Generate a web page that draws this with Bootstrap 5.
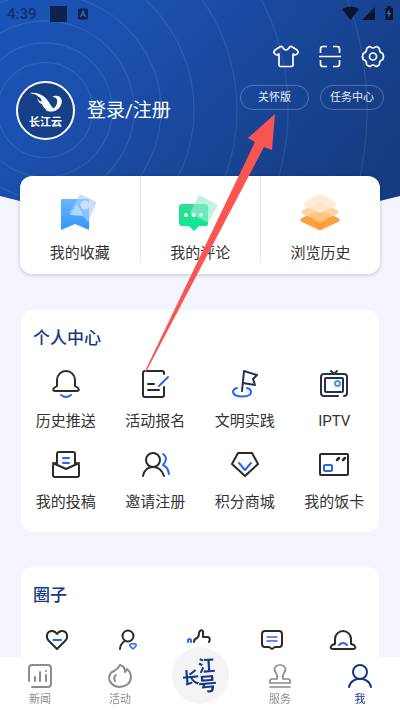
<!DOCTYPE html>
<html lang="zh-CN">
<head>
<meta charset="utf-8">
<meta name="viewport" content="width=device-width, initial-scale=1">
<title>我</title>
<link href="https://cdn.jsdelivr.net/npm/bootstrap@5.3.0/dist/css/bootstrap.min.css" rel="stylesheet">
<style>
:root{--navy:#153a85;--ink:#333}
body{font-family:Roboto,"Noto Sans CJK SC",sans-serif;background:#f3f4fd;color:var(--ink);font-size:15px;line-height:20px}
svg{display:block;overflow:visible}
.ln{fill:none;stroke:#2b2b2b;stroke-width:2;stroke-linecap:round;stroke-linejoin:round}
.ln .b{stroke:#2468f2}
.ln.dk{stroke:#27324a}
.hero-bg{position:absolute;top:0;left:0;width:100%;height:224px;z-index:-1}
.status{height:28px;padding:0 7px;font-weight:500;color:#11306c}
.hero{padding:17px 16px 0}
.avatar{width:59px;height:59px;background:#153f87;border:2px solid #fff;margin-top:36px}
.login{font-size:19px;line-height:28px;margin-top:52px}
.tools{gap:21px}
.pill{height:25px;font-size:11px;line-height:16px;color:#e8eefa;border:1px solid #ffffff40;padding:0}
.pill:hover{color:#fff;border-color:#fff}
.p1{width:69px}.p2{width:64px}
.quick{margin:36px 20px 0;border-radius:12px;box-shadow:0 1px 4px #0003;padding-bottom:12px}
.quick a{padding:18px 0 0;height:86px;color:var(--ink)}
.quick a+a{border-left:1px solid #dfe7ee}
.quick span{margin-top:11px}
.panel{margin:36px 21px 0;border-radius:12px;padding-top:16px}
.panel h2{font-size:17px;line-height:24px;font-weight:500;color:var(--navy);margin:0 0 20px 12px}
.menu a{color:var(--ink);height:81px}
.menu span{margin-top:13px}
.panel+.panel{margin-top:35px}
.panel+.panel h2{margin-bottom:18px}
.circle-row{height:60px;padding-top:5px}
.tabs{height:53px;background:#fff;font-size:11px;line-height:14px}
.tabs a{color:#8c8c8c;padding-top:7px}
.tabs a.on{color:var(--navy)}
.tabs span{margin-top:5px}
.tabs .ln{stroke:currentColor;stroke-width:2}
.tabs .hub{width:57px;height:57px;background:#f4f4f4;padding:0;margin-top:-10px}
.arrow{position:absolute;left:145px;top:114px;z-index:5;pointer-events:none}
</style>
</head>
<body>
<svg class="hero-bg" viewBox="0 0 400 224" preserveAspectRatio="none" aria-hidden="true">
<defs><linearGradient id="hb" x1="0" y1="0" x2="1" y2=".55"><stop offset="0" stop-color="#1b55b8"/><stop offset=".3" stop-color="#1b50ae"/><stop offset="1" stop-color="#163b80"/></linearGradient>
<clipPath id="hc"><path d="M0 0H400V196Q200 250 0 196Z"/></clipPath></defs>
<g clip-path="url(#hc)"><rect width="400" height="250" fill="url(#hb)"/>
<g fill="none" stroke="#fff" stroke-opacity=".09" stroke-width="1.3"><circle cx="45" cy="110" r="47.5"/><circle cx="45" cy="110" r="67"/><circle cx="45" cy="110" r="89"/><circle cx="45" cy="110" r="116"/><circle cx="45" cy="110" r="149"/><circle cx="45" cy="110" r="192"/><circle cx="45" cy="110" r="243"/><circle cx="45" cy="110" r="322"/></g></g>
</svg>

<div class="status d-flex align-items-center justify-content-between">
<div class="d-flex align-items-center"><span>4:39</span>
<svg class="ms-2" width="44" height="18" viewBox="0 0 44 18"><path fill="#0d2250" d="M5 1h17v16H5z"/><rect x="33" y="3.500" width="10" height="11" rx="1.500" fill="#0d2250"/><path d="M35.500 12l2.500-6 2.500 6M36.500 10h3" fill="none" stroke="#3d6dbd" stroke-width="1.200"/></svg></div>
<svg width="51" height="14" viewBox="0 0 51 14" fill="#08162f"><path d="M0 2Q9-3 17 2L8.500 13zM33 0V13H20zM43.500 1h2V-1h3.500v2h2V13h-7.500V1z"/><path d="M47.500 2l-3 5h2l-.7 4 3.500-5h-2z" fill="#3c68ad"/></svg>
</div>

<header class="hero d-flex justify-content-between align-items-start">
<div class="d-flex">
<div class="avatar rounded-circle">
<svg width="55" height="55" viewBox="0 0 55 55" fill="#fff"><path d="M12 10C19 9 26 12 30 18C33 22 34 25 37 27C31 29 26 27 24 21C22 21 20 18 19 15C23 21 26 18 21 14C18 11 15 11 12 10Z"/><path d="M34 14C41 10 46 16 43 22C40 29 32 30 27 27C33 28 38 25 39 20C40 16 38 14 34 14Z"/><text x="27.500" y="43" text-anchor="middle" font-size="11" font-weight="700">长江云</text></svg>
</div>
<a class="login text-white text-decoration-none ms-2 ps-1" href="#">登录/注册</a>
</div>
<div>
<div class="tools d-flex justify-content-end">
<button class="btn p-0 border-0" aria-label="换肤"><svg width="24" height="24" viewBox="0 0 24 24" fill="none" stroke="#fff" stroke-width="1.700" stroke-linejoin="round"><path d="M6.500 1.500L1 5Q-1 7 .5 8.500Q2.500 11 5 9V20Q5 21.500 6.500 21.500H17.500Q19 21.500 19 20V9Q21.500 11 23.500 8.500Q25 7 23 5L17.500 1.500Q16 1 15 3Q12 7 9 3Q8 1 6.500 1.500Z"/></svg></button>
<button class="btn p-0 border-0" aria-label="扫一扫"><svg width="22" height="24" viewBox="0 0 22 24" fill="none" stroke="#fff" stroke-width="1.700"><path d="M1.500 8V4Q1.500 1.500 4 1.500H8M14 1.500H18Q20.500 1.500 20.500 4V8M1.500 15V19Q1.500 21.500 4 21.500H8M14 21.500H18Q20.500 21.500 20.500 19V15M0 11.500H22"/></svg></button>
<button class="btn p-0 border-0" aria-label="设置"><svg width="22" height="24" viewBox="0 0 22 24" fill="none" stroke="#fff" stroke-width="1.700" stroke-linejoin="round"><path d="M7.500 1.500C9 1.500 9 3 11 3S13 1.500 14.500 1.500L17 3C18 4 17 5 18 6.500S20.500 8 21 9Q22 11.500 21 14C20.500 15 19 15 18 16.500S18 19 17 20L14.500 21.500C13 21.500 13 20 11 20S9 21.500 7.500 21.500L5 20C4 19 5 18 4 16.500S1.500 15 1 14Q0 11.500 1 9C1.500 8 3 8 4 6.500S4 4 5 3Z"/><circle cx="11" cy="11.500" r="3.500"/></svg></button>
</div>
<div class="d-flex justify-content-end mt-3" style="gap:11px">
<button class="btn pill p1 rounded-pill">关怀版</button><button class="btn pill p2 rounded-pill">任务中心</button>
</div>
</div>
</header>

<main>
<nav class="quick bg-white d-flex" aria-label="我的内容">
<a class="flex-fill w-100 d-flex flex-column align-items-center text-decoration-none" href="#">
<svg width="40" height="38" viewBox="0 0 40 38"><defs><linearGradient id="q1" x2="0" y2="1"><stop stop-color="#69b6fc"/><stop offset="1" stop-color="#3296fc"/></linearGradient></defs><path d="M3 5H28Q29 5 29 6V36L15 30 1 36V6Q1 5 3 5Z" fill="url(#q1)"/><path d="M22 1L35 7Q37 8 36 10L28 28 23 22 11 21Q9 20 10 18L19 2Q20 0 22 1Z" fill="#a9cdfd" opacity=".65"/><circle cx="25" cy="11" r="4.500" fill="#dcecff" opacity=".75"/><path d="M10 21L17 10 24 22Z" fill="#dcecff" opacity=".5"/></svg><span>我的收藏</span></a>
<a class="flex-fill w-100 d-flex flex-column align-items-center text-decoration-none" href="#">
<svg width="42" height="38" viewBox="0 0 42 38"><defs><linearGradient id="q2" x2="0" y2="1"><stop stop-color="#35dc94"/><stop offset="1" stop-color="#00ec8f"/></linearGradient></defs><path d="M3 10H27Q29 10 29 12V30Q29 32 27 32H20L15 37 10 32H3Q0 32 0 29V13Q0 10 3 10Z" fill="url(#q2)"/><path d="M22 2L37 10Q39 11 38 13L30 27Q29 29 27 28L14 21Q11 20 12 17L19 3Q20 1 22 2Z" fill="#97edce" opacity=".65"/><g fill="#fff"><circle cx="7" cy="21" r="2"/><circle cx="14.500" cy="21" r="2"/><circle cx="22" cy="21" r="2" opacity=".8"/></g></svg><span>我的评论</span></a>
<a class="flex-fill w-100 d-flex flex-column align-items-center text-decoration-none" href="#">
<svg width="40" height="38" viewBox="0 0 40 38"><path d="M2 24L17 17Q20 15 23 17L38 24Q41 26 38 28L23 35Q20 37 17 35L2 28Q-1 26 2 24Z" fill="#ff9f3c"/><path d="M3 16L17 9Q20 7 23 9L37 16Q40 18 37 20L23 27Q20 29 17 27L3 20Q0 18 3 16Z" fill="#ffcb8c" opacity=".85"/><path d="M5 8L17 1Q20 0 23 1L35 8Q38 10 35 12L23 18Q20 20 17 18L5 12Q2 10 5 8Z" fill="#ffe8d0" opacity=".9"/></svg><span>浏览历史</span></a>
</nav>

<section class="panel bg-white">
<h2>个人中心</h2>
<div class="menu row row-cols-4 g-0">
<a class="col d-flex flex-column align-items-center text-decoration-none" href="#"><svg class="ln" width="28" height="28" viewBox="0 0 28 28"><path d="M5 16V10A9 9 0 0 1 23 10V16L26 18Q28 21 25 21H3Q0 21 2 18Z"/><path class="b" d="M9 25Q14 29 19 25"/></svg><span>历史推送</span></a>
<a class="col d-flex flex-column align-items-center text-decoration-none" href="#"><svg class="ln" width="28" height="28" viewBox="0 0 28 28"><path d="M23 4V3Q23 1 21 1H4Q2 1 2 3V25Q2 27 4 27H21Q23 27 23 25V17M7 14H13M7 20H18"/><path class="b" d="M18 16L27 7"/></svg><span>活动报名</span></a>
<a class="col d-flex flex-column align-items-center text-decoration-none" href="#"><svg class="ln dk" width="28" height="28" viewBox="0 0 28 28"><path d="M11 21L13 1 26 5 22 9 24 15 12 13"/><path class="b" d="M6 18Q2 19 2 22C3 28 20 28 20 22Q20 19 16 18"/></svg><span>文明实践</span></a>
<a class="col d-flex flex-column align-items-center text-decoration-none" href="#"><svg class="ln dk" width="28" height="28" viewBox="0 0 28 28"><path d="M18 26H4Q1 26 1 23V7Q1 4 4 4H24Q27 4 27 7V23Q27 26 24 26M11 1L14 4 17 1"/><rect x="5" y="8" width="18" height="14" rx="1"/><circle cx="17.500" cy="13.500" r="2.500" style="stroke:#4398f5"/></svg><span>IPTV</span></a>
<a class="col d-flex flex-column align-items-center text-decoration-none" href="#"><svg class="ln" width="28" height="28" viewBox="0 0 28 28"><path d="M5 11L1 14V24Q1 26 3 26H25Q27 26 27 24V14L23 11M1 12L14 18 27 12M5 14V3Q5 1 7 1H21Q23 1 23 3V14"/><path class="b" d="M11 7H17M11 12H17"/></svg><span>我的投稿</span></a>
<a class="col d-flex flex-column align-items-center text-decoration-none" href="#"><svg class="ln" width="28" height="28" viewBox="0 0 28 28"><circle cx="12" cy="9" r="7"/><path d="M2 25Q4 16 12 16T23 25"/><path class="b" d="M22 3Q28 7 22 14Q27 16 28 23"/></svg><span>邀请注册</span></a>
<a class="col d-flex flex-column align-items-center text-decoration-none" href="#"><svg class="ln" width="28" height="28" viewBox="0 0 28 28"><path d="M7 2H21L27 13 14 25 1 13Z"/><path class="b" d="M8 12L14 19 20 12"/></svg><span>积分商城</span></a>
<a class="col d-flex flex-column align-items-center text-decoration-none" href="#"><svg class="ln" width="30" height="28" viewBox="0 0 30 28"><rect x="1" y="3" width="28" height="21" rx="1"/><path d="M18 9L20 7M24 9L26 7" stroke-width="2.500"/><rect class="b" x="5" y="14" width="8" height="6" rx="1"/></svg><span>我的饭卡</span></a>
</div>
</section>

<section class="panel bg-white">
<h2>圈子</h2>
<div class="circle-row row row-cols-5 g-0">
<a class="col d-flex justify-content-center" href="#" aria-label="关注"><svg class="ln" width="22" height="20" viewBox="0 0 22 20"><path d="M11 19L3 11C-1 7 1 1 6 1Q9 1 11 4Q13 1 16 1C21 1 23 7 19 11Z"/><path class="b" d="M7.500 10H15"/></svg></a>
<a class="col d-flex justify-content-center" href="#" aria-label="好友"><svg class="ln" width="20" height="20" viewBox="0 0 20 20"><circle cx="10" cy="6" r="5.500"/><path d="M2 19Q2 14 7 11"/><path class="b" stroke-width="1.500" d="M15 19L12 16Q11 13 15 14Q19 13 18 16Z"/></svg></a>
<a class="col d-flex justify-content-center" href="#" aria-label="点赞"><svg class="ln" width="26" height="20" viewBox="0 0 26 20"><path d="M7 12Q7 9 10 8Q12 7 12 3Q13-1 16 1V7H21Q24 8 22 12"/><path class="b" d="M1 12V10Q2 8 4 10V12"/></svg></a>
<a class="col d-flex justify-content-center" href="#" aria-label="评论"><svg class="ln" width="22" height="20" viewBox="0 0 22 20"><path d="M4 1H18Q21 1 21 4V14Q21 17 18 17H14L11 19 8 17H4Q1 17 1 14V4Q1 1 4 1Z"/><path class="b" stroke-width="1.500" d="M6 7H16M6 11H16"/></svg></a>
<a class="col d-flex justify-content-center" href="#" aria-label="通知"><svg class="ln" width="26" height="20" viewBox="0 0 26 20"><path d="M5 14V9A8 8 0 0 1 21 9V14L24 15Q27 19 23 19H3Q-1 19 2 15Z"/><path class="b" d="M9 15Q13 11 17 15"/></svg></a>
</div>
</section>
</main>

<nav class="tabs fixed-bottom d-flex" aria-label="主导航">
<a class="w-100 d-flex flex-column align-items-center text-decoration-none" href="#"><svg class="ln" width="24" height="24" viewBox="0 0 24 24"><path d="M1 17V4Q1 1 4 1H20Q23 1 23 4V20Q23 23 20 23H4M7 13V17M12 8V17M18 11V17M18 7V7.100"/></svg><span>新闻</span></a>
<a class="w-100 d-flex flex-column align-items-center text-decoration-none" href="#"><svg class="ln" width="24" height="24" viewBox="0 0 24 24"><path d="M12 1Q17 2 17 8Q18 7 19 5C24 9 24 16 20 20C15 24 8 24 4 20C-1 15 1 9 6 7Q10 5 12 1ZM8 11Q5 13 7 17"/></svg><span>活动</span></a>
<div class="w-100 d-flex justify-content-center">
<a class="hub rounded-circle flex-shrink-0 on" href="#" aria-label="长江号"><svg width="57" height="57" viewBox="0 0 57 57" fill="#153a85" font-weight="700"><text x="10" y="37" font-size="17" transform="rotate(-5 19 30)">长</text><text x="26" y="25" font-size="17" transform="rotate(-4 34 18)">江</text><text x="26" y="44" font-size="19" transform="rotate(-5 36 36)">号</text></svg></a></div>
<a class="w-100 d-flex flex-column align-items-center text-decoration-none" href="#"><svg class="ln" width="24" height="24" viewBox="0 0 24 24"><path d="M9 15Q10 12 8 9C4 3 9 1 12 1S20 3 16 9Q14 12 15 15H20Q22 15 22 17V19H2V17Q2 15 4 15ZM2 23H22" stroke-width="1.700"/></svg><span>服务</span></a>
<a class="on w-100 d-flex flex-column align-items-center text-decoration-none" href="#" aria-current="page"><svg class="ln" width="24" height="24" viewBox="0 0 24 24"><circle cx="12" cy="8" r="7"/><path d="M1 23C3 12 21 12 23 23"/></svg><span>我</span></a>
</nav>

<svg class="arrow" width="130" height="258" viewBox="0 0 130 258" aria-hidden="true"><path fill="#fb5553" d="M130 0L103 24 110 28 0 257 1 258 119 33 127 36Z"/></svg>
<script src="https://cdn.jsdelivr.net/npm/bootstrap@5.3.0/dist/js/bootstrap.bundle.min.js"></script>
</body>
</html>
